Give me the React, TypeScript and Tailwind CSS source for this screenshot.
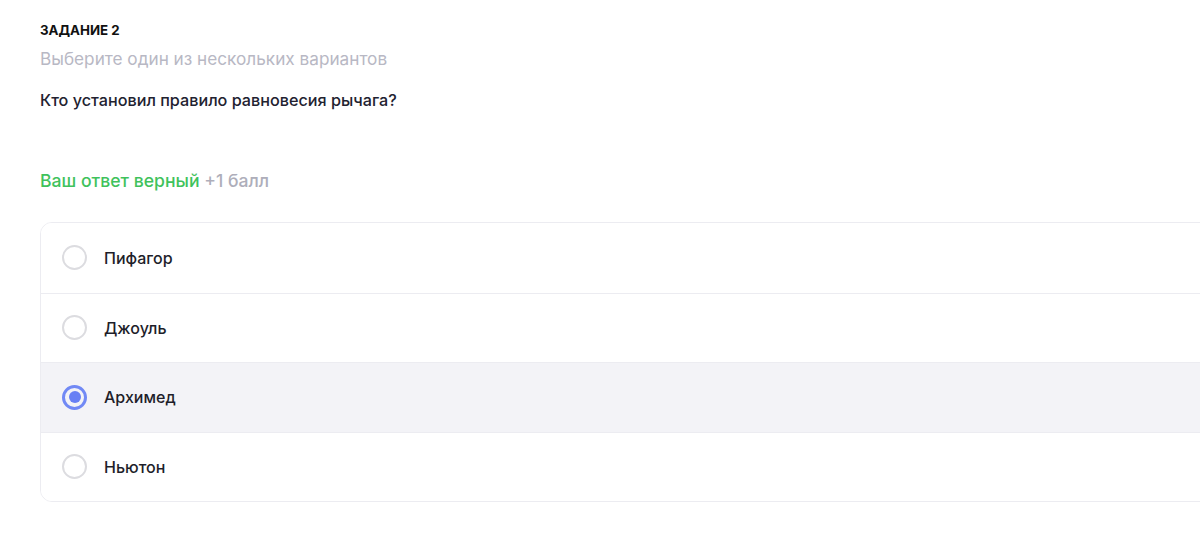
import { useState } from "react"

const options = ["Пифагор", "Джоуль", "Архимед", "Ньютон"]

export default function App() {
  const [selected] = useState(2)

  return (
    <div className="min-h-[545px] w-[1200px] overflow-hidden bg-white pl-10 pt-[22px] font-['Inter','Noto_Sans',sans-serif]">
      <div className="text-[13.3px] font-bold leading-4 text-[#111]">ЗАДАНИЕ 2</div>
      <div className="mt-[11px] text-[17.2px] leading-5 text-[#b8b8c4]">Выберите один из нескольких вариантов</div>
      <div className="mt-[21px] text-[16.2px] font-medium leading-5 text-[#222230]">Кто установил правило равновесия рычага?</div>

      <div className="mt-[61px] text-[17.6px] font-medium leading-5">
        <span className="text-[#3fc25c]">Ваш ответ верный</span>{" "}
        <span className="text-[#aeaeba]">+1 балл</span>
      </div>

      {/* варианты ответа */}
      <div className="mt-[31px] w-[1200px] overflow-hidden rounded-xl border border-[#ececf1]">
        {options.map((opt, i) => {
          const active = i === selected
          return (
            <div
              key={opt}
              className={`flex h-[69.5px] items-center gap-[17px] pl-[21px] ${i > 0 ? "border-t border-[#ececf1]" : ""} ${active ? "bg-[#f3f3f7]" : "bg-white"}`}
            >
              {active ? (
                <span className="flex h-[25px] w-[25px] items-center justify-center rounded-full border-[3px] border-[#7189f5]">
                  <span className="h-[12px] w-[12px] rounded-full bg-[#6880f4]" />
                </span>
              ) : (
                <span className="h-[25px] w-[25px] rounded-full border-2 border-[#dcdce0]" />
              )}
              <span className="text-[16px] font-medium text-[#1e1e2a]">{opt}</span>
            </div>
          )
        })}
      </div>
    </div>
  )
}
